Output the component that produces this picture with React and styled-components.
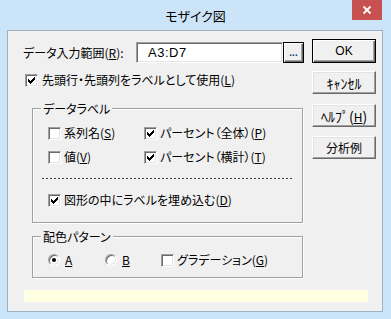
import React from 'react'
import styled, { createGlobalStyle } from 'styled-components'

const jp = `"Noto Sans CJK JP", "Liberation Sans", sans-serif`

const GlobalStyle = createGlobalStyle`
  * { box-sizing: border-box; }
  body {
    margin: 0;
    background: #cce4f7;
  }
`

const Window = styled.div`
  width: 391px;
  height: 319px;
  background: #cce4f7;
  display: flex;
  flex-direction: column;
  font-family: ${jp};
  font-size: 12px;
  color: #000;
  font-feature-settings: "palt";
`

const TitleBar = styled.div`
  height: 30px;
  flex: none;
  display: grid;
  grid-template-columns: 1fr auto 1fr;
`

const Title = styled.div`
  grid-column: 2;
  align-self: center;
  font-size: 13px;
  line-height: 16px;
  margin-top: 1px;
`

const CloseBox = styled.div`
  grid-column: 3;
  justify-self: end;
  width: 30px;
  height: 20px;
  margin-right: 9px;
  background: #c75050;
  display: grid;
  place-items: center;
`

const Client = styled.div`
  flex: 1;
  margin: 0 8px 7px 7px;
  border: 1px solid #9fb2c4;
  background: #f0f0f0;
  display: grid;
  grid-template-columns: 304px 64px;
  grid-template-rows: auto 1fr;
  align-items: start;
`

const Main = styled.div`
  display: flex;
  flex-direction: column;
`

const InputRow = styled.div`
  margin-top: 11px;
  padding-left: 15px;
  height: 21px;
  display: flex;
  align-items: center;
`

const FieldLabel = styled.span`
  width: 113px;
  line-height: 16px;
`

const TextBox = styled.div`
  width: 147px;
  height: 21px;
  background: #fff;
  border: 1px solid;
  border-color: #a0a0a0 #fff #fff #a0a0a0;
  box-shadow: inset 1px 1px #696969, inset -1px -1px #e3e3e3;
  padding-left: 11px;
  font-family: "Liberation Sans", sans-serif;
  font-size: 13px;
  letter-spacing: 0.5px;
  line-height: 19px;
`

const Browse = styled.div`
  width: 21px;
  height: 21px;
  background: #f0f0f0;
  border: 1px solid #000;
  box-shadow: inset 1px 1px #fff, inset -1px -1px #696969, inset -2px -2px #a0a0a0;
  display: flex;
  align-items: flex-end;
  justify-content: center;
  font-family: "Liberation Sans", sans-serif;
  font-size: 10px;
  font-weight: bold;
  line-height: 12px;
  padding-bottom: 3px;
  color: #1c3c7c;
`

const Row = styled.label`
  display: flex;
  align-items: center;
  height: 16px;
  line-height: 16px;
  gap: ${p => p.$gap || 3}px;
  margin-top: ${p => p.$top || 0}px;
  margin-left: ${p => p.$left || 0}px;
  width: ${p => (p.$width ? `${p.$width}px` : 'auto')};
`

const Box = styled.span`
  width: 13px;
  height: 13px;
  flex: none;
  background: #fff;
  border: 1px solid;
  border-color: #a0a0a0 #fff #fff #a0a0a0;
  box-shadow: inset 1px 1px #696969, inset -1px -1px #e3e3e3;
  display: block;

  svg {
    display: block;
  }
`

const Radio = styled.span`
  width: 12px;
  height: 12px;
  flex: none;
  border-radius: 50%;
  background: #fff;
  border: 1px solid;
  border-color: #a0a0a0 #fff #fff #a0a0a0;
  box-shadow: inset 1px 1px #696969, inset -1px -1px #e3e3e3;
  display: grid;
  place-items: center;

  &::after {
    content: '';
    width: 4px;
    height: 4px;
    border-radius: 50%;
    background: ${p => (p.$on ? '#000' : 'transparent')};
  }
`

const Group = styled.fieldset`
  margin: ${p => p.$top}px 0 0 24px;
  width: 271px;
  min-inline-size: 0;
  padding: 0 0 ${p => p.$bottom}px 0;
  border: 1px solid #a0a0a0;
  box-shadow: inset 1px 1px #fff, 1px 1px #fff;
`

const Legend = styled.legend`
  margin-left: 8px;
  padding: 0 2px;
  line-height: 15px;
  background: #f0f0f0;
`

const CheckGrid = styled.div`
  margin: 9px 0 0 15px;
  display: grid;
  grid-template-columns: 96px auto;
  row-gap: 8px;
`

const Dots = styled.div`
  margin: 13px 10px 0 9px;
  height: 1px;
  background: repeating-linear-gradient(to right, #404040 0 2px, transparent 2px 4px);
`

const RadioRow = styled.div`
  margin: 8px 0 0 15px;
  display: flex;
`

const Side = styled.div`
  display: flex;
  flex-direction: column;
  padding-top: 8px;
`

const Button = styled.button`
  width: 64px;
  height: ${p => (p.$default ? 24 : 23)}px;
  margin-top: ${p => p.$top || 0}px;
  padding: 0;
  background: #f0f0f0;
  font-family: ${p => (p.$latin ? '"Liberation Sans", sans-serif' : jp)};
  font-size: ${p => (p.$narrow ? 14 : 12)}px;
  font-feature-settings: "palt";
  color: #000;
  border: 1px solid;
  border-color: ${p => (p.$default ? '#000' : '#fff #696969 #696969 #fff')};
  box-shadow: ${p =>
    p.$default
      ? 'inset 1px 1px #fff, inset -1px -1px #696969, inset -2px -2px #a0a0a0'
      : 'inset -1px -1px #a0a0a0, inset 1px 1px #e3e3e3'};

  u {
    font-size: 12px;
  }
`

const StatusBar = styled.div`
  grid-column: 1 / -1;
  margin: 12px 0 0 16px;
  width: 344px;
  height: 12px;
  background: #ffffe1;
`

function CheckMark() {
  return (
    <svg width="11" height="11" viewBox="0 0 11 11" shapeRendering="crispEdges">
      <g fill="#000">
        <rect x="8" y="2" width="1" height="1" />
        <rect x="7" y="3" width="2" height="1" />
        <rect x="2" y="4" width="1" height="1" />
        <rect x="6" y="4" width="3" height="1" />
        <rect x="2" y="5" width="2" height="1" />
        <rect x="5" y="5" width="3" height="1" />
        <rect x="2" y="6" width="5" height="1" />
        <rect x="3" y="7" width="3" height="1" />
        <rect x="4" y="8" width="1" height="1" />
      </g>
    </svg>
  )
}

function Check({ on, children, ...rest }) {
  return (
    <Row {...rest}>
      <Box>{on && <CheckMark />}</Box>
      <span>{children}</span>
    </Row>
  )
}

function Option({ on, children, ...rest }) {
  return (
    <Row $gap={5} {...rest}>
      <Radio $on={on} />
      <span>{children}</span>
    </Row>
  )
}

export default function App() {
  return (
    <>
      <GlobalStyle />
      <Window>
        <TitleBar>
          <Title>モザイク図</Title>
          <CloseBox>
            <svg width="10" height="10" viewBox="0 0 10 10">
              <path d="M1.5 1.5 L8.5 8.5 M8.5 1.5 L1.5 8.5" stroke="#fff" strokeWidth="1.8" />
            </svg>
          </CloseBox>
        </TitleBar>

        <Client>
          <Main>
            <InputRow>
              <FieldLabel>データ入力範囲(<u>R</u>):</FieldLabel>
              <TextBox>A3:D7</TextBox>
              <Browse>...</Browse>
            </InputRow>

            <Check on $top={9} $left={17} $gap={4}>
              先頭行・先頭列をラベルとして使用(<u>L</u>)
            </Check>

            <Group $top={13} $bottom={14}>
              <Legend>データラベル</Legend>
              <CheckGrid>
                <Check>系列名(<u>S</u>)</Check>
                <Check on>パーセント（全体）(<u>P</u>)</Check>
                <Check>値(<u>V</u>)</Check>
                <Check on>パーセント（横計）(<u>T</u>)</Check>
              </CheckGrid>
              <Dots />
              <Check on $top={13} $left={15}>
                図形の中にラベルを埋め込む(<u>D</u>)
              </Check>
            </Group>

            <Group $top={6} $bottom={9}>
              <Legend>配色パターン</Legend>
              <RadioRow>
                <Option on $width={57}><u>A</u></Option>
                <Option $width={56}><u>B</u></Option>
                <Check>グラデーション(<u>G</u>)</Check>
              </RadioRow>
            </Group>
          </Main>

          <Side>
            <Button $default $latin>OK</Button>
            <Button $top={8} $narrow>ｷｬﾝｾﾙ</Button>
            <Button $top={10} $narrow>ﾍﾙﾌﾟ(<u>H</u>)</Button>
            <Button $top={9}>分析例</Button>
          </Side>

          <StatusBar />
        </Client>
      </Window>
    </>
  )
}
